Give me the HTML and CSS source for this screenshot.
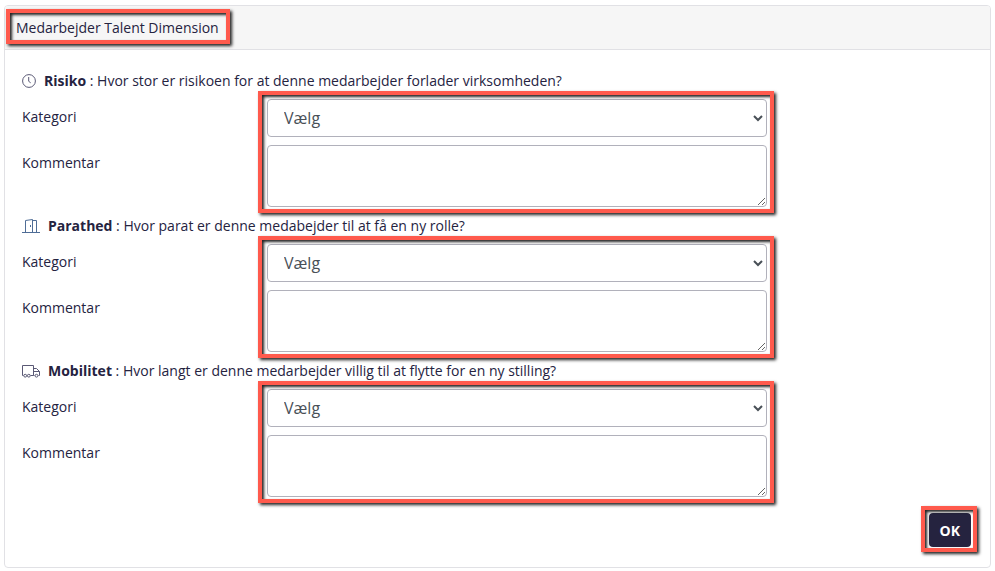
FILE: index.html
```html
<!DOCTYPE html>
<html lang="da">
<head>
<meta charset="utf-8">
<title>Medarbejder Talent Dimension</title>
<link rel="stylesheet" href="styles.css">
</head>
<body>
<form class="card">
  <header class="card-header">
    <h1 class="card-title marked marked-title">Medarbejder Talent Dimension</h1>
  </header>
  <div class="card-body">
    <section class="dimension">
      <h2 class="question">
        <svg class="icon" width="14" height="14" viewBox="0 0 14 14" aria-hidden="true"><circle cx="7" cy="7" r="6.4"/><path d="M6.7 3v4.3l2 1.5"/></svg>
        <span><strong>Risiko</strong> : Hvor stor er risikoen for at denne medarbejder forlader virksomheden?</span>
      </h2>
      <div class="fields marked marked-fields">
        <label for="risk-category">Kategori</label>
        <select id="risk-category"><option>Vælg</option></select>
        <label for="risk-comment">Kommentar</label>
        <textarea id="risk-comment"></textarea>
      </div>
    </section>
    <section class="dimension">
      <h2 class="question">
        <svg class="icon icon-door" width="18" height="14" viewBox="0 0 18 14" aria-hidden="true"><path d="M0 13.5h18M3.5 13.5v-12l7-1v13M10.5 1.5h4v12M8.5 6v2"/></svg>
        <span><strong>Parathed</strong> : Hvor parat er denne medabejder til at få en ny rolle?</span>
      </h2>
      <div class="fields marked marked-fields">
        <label for="ready-category">Kategori</label>
        <select id="ready-category"><option>Vælg</option></select>
        <label for="ready-comment">Kommentar</label>
        <textarea id="ready-comment"></textarea>
      </div>
    </section>
    <section class="dimension">
      <h2 class="question">
        <svg class="icon" width="18" height="14" viewBox="0 0 18 14" aria-hidden="true"><path d="M1.5 11.5h-1V1.5h11v10H8.5M11.5 4.5h3l3 3v4h-1M11.5 7.5h6M12.5 11.5h-1"/><circle cx="3.2" cy="11.7" r="1.4"/><circle cx="6.8" cy="11.7" r="1.4"/><circle cx="14.5" cy="11.7" r="1.4"/></svg>
        <span><strong>Mobilitet</strong> : Hvor langt er denne medarbejder villig til at flytte for en ny stilling?</span>
      </h2>
      <div class="fields marked marked-fields">
        <label for="mobility-category">Kategori</label>
        <select id="mobility-category"><option>Vælg</option></select>
        <label for="mobility-comment">Kommentar</label>
        <textarea id="mobility-comment"></textarea>
      </div>
    </section>
    <div class="actions">
      <div class="marked marked-button"><button type="button" class="button">OK</button></div>
    </div>
  </div>
</form>
</body>
</html>
```
FILE: styles.css
```css
* {
  box-sizing: border-box;
}

body {
  margin: 5px 4px 3px;
  background: #fff;
  color: #25233f;
  font: 14px/21px "Open Sans", sans-serif;
}

.card {
  border: 1px solid #e1e1e5;
  border-radius: 4px;
}

.card-header {
  display: flex;
  padding: 11px;
  background: #f6f6f6;
  border-bottom: 1px solid #e1e1e5;
  border-radius: 3px 3px 0 0;
}

.card-title,
.question {
  margin: 0;
  font-size: 14px;
  font-weight: 400;
}

.card-body {
  padding: 20px 19px 20px 17px;
}

.dimension {
  margin-bottom: 8px;
}

.question {
  display: flex;
  align-items: center;
  gap: 8px;
  margin-bottom: 8px;
}

.icon {
  flex: none;
  fill: none;
  stroke: #5a5975;
  stroke-width: 1;
}

.icon-door {
  stroke: #4f6d96;
}

.fields {
  display: grid;
  grid-template-columns: 245px minmax(0, 1fr);
  row-gap: 8px;
  max-width: 745px;
}

.fields label {
  padding-top: 7px;
}

.fields select,
.fields textarea {
  display: block;
  width: 100%;
  margin: 0;
  border: 1px solid #b1b1bb;
  border-radius: 4px;
  background: #fff;
  color: #495057;
  font: 16px/24px "Open Sans", sans-serif;
}

.fields select {
  height: 38px;
  padding: 0 0 0 12px;
}

.fields textarea {
  height: 62px;
  padding: 6px 12px;
  resize: vertical;
}

.actions {
  display: flex;
  justify-content: flex-end;
  margin-top: 16px;
}

.button {
  display: block;
  height: 34px;
  padding: 0 11px;
  border: 0;
  border-radius: 4px;
  background: #25233f;
  color: #fff;
  font: 700 14px/21px "Open Sans", sans-serif;
}

/* Red callout frames around the highlighted parts */
.marked {
  position: relative;
}

.marked::after {
  content: "";
  position: absolute;
  border: 4px solid #ff5a4d;
  box-shadow: 2px 2px 3px #222, inset 2px 2px 3px #222;
  pointer-events: none;
}

.marked-title::after {
  inset: -8px -11px -6px -10px;
}

.marked-fields::after {
  inset: -8px -7px -6px 236px;
}

.marked-button::after {
  inset: -7px -6px -5px -8px;
}
```
